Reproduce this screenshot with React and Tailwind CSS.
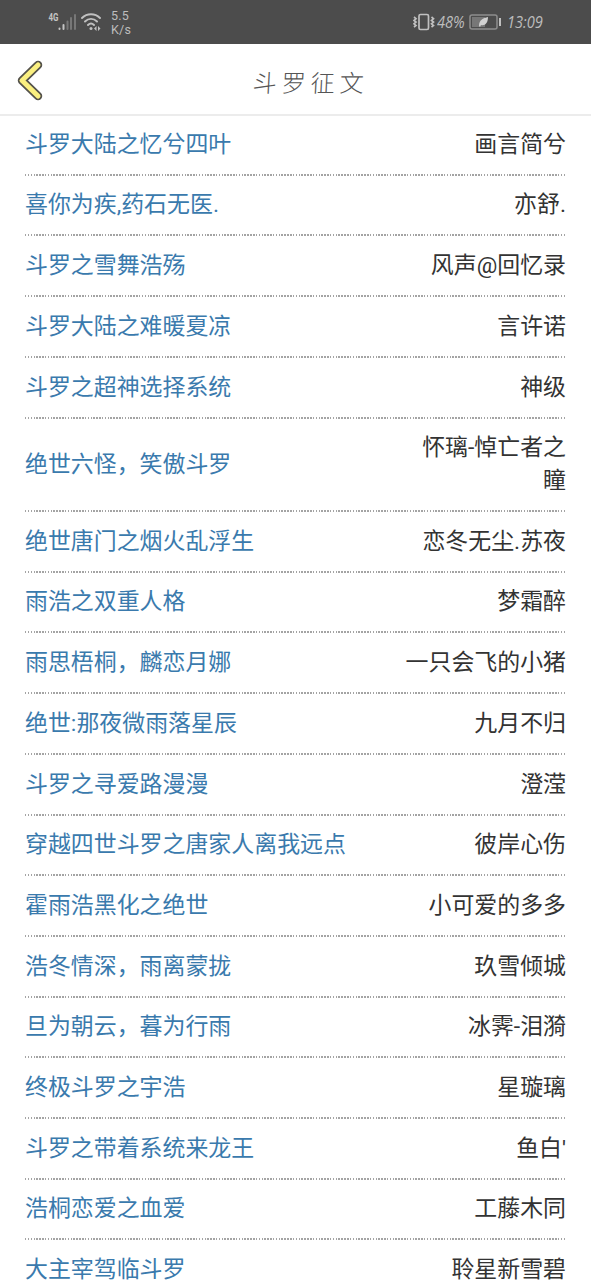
const entries = [
  { title: '斗罗大陆之忆兮四叶', author: '画言简兮' },
  { title: '喜你为疾,药石无医.', author: '亦舒.' },
  { title: '斗罗之雪舞浩殇', author: '风声@回忆录' },
  { title: '斗罗大陆之难暖夏凉', author: '言许诺' },
  { title: '斗罗之超神选择系统', author: '神级' },
  { title: '绝世六怪，笑傲斗罗', author: '怀璃-悼亡者之瞳' },
  { title: '绝世唐门之烟火乱浮生', author: '恋冬无尘.苏夜' },
  { title: '雨浩之双重人格', author: '梦霜醉' },
  { title: '雨思梧桐，麟恋月娜', author: '一只会飞的小猪' },
  { title: '绝世:那夜微雨落星辰', author: '九月不归' },
  { title: '斗罗之寻爱路漫漫', author: '澄滢' },
  { title: '穿越四世斗罗之唐家人离我远点', author: '彼岸心伤' },
  { title: '霍雨浩黑化之绝世', author: '小可爱的多多' },
  { title: '浩冬情深，雨离蒙拢', author: '玖雪倾城' },
  { title: '旦为朝云，暮为行雨', author: '冰霁-泪漪' },
  { title: '终极斗罗之宇浩', author: '星璇璃' },
  { title: '斗罗之带着系统来龙王', author: "鱼白'" },
  { title: '浩桐恋爱之血爱', author: '工藤木同' },
  { title: '大主宰驾临斗罗', author: '聆星新雪碧' },
];

const StatusBar = () => (
  <div className="flex h-11 shrink-0 items-center justify-between bg-[#4c4c4c] pl-12 pr-12 text-[#bdbdbd]">
    <div className="flex items-center">
      <svg width="30" height="22" viewBox="0 0 30 22">
        <text x="0.5" y="10" fontSize="10" fontWeight="700" textLength="10" lengthAdjust="spacingAndGlyphs" fill="#c4c4c4" className="font-['Roboto',sans-serif]">4G</text>
        <g strokeWidth="2" strokeLinecap="round">
          <path d="M11.5 17.5v.5M15.5 14v4" stroke="#c4c4c4" />
          <path d="M19.5 10.5v7.5M23 7v11M27 4v14" stroke="#777" />
        </g>
      </svg>
      <svg className="ml-[3px]" width="22" height="22" viewBox="0 0 22 22" fill="none" stroke="#c0c0c0" strokeWidth="1.9" strokeLinecap="round">
        <path d="M1 7C6 2 14 2 19 7M4 10.5c3.5-3.5 8.5-3.5 12 0M7 14c2-2 4-2 6 0" />
        <circle cx="10" cy="17.5" r="1.5" fill="#c0c0c0" stroke="none" />
        <path d="M15.5 15v5l-2.5-2.5zM17 15v5l2.5-2.5z" fill="#c0c0c0" stroke="none" />
      </svg>
      <div className="ml-2 pt-0.5 font-['Roboto',sans-serif] text-[12.5px] leading-[14.5px] tracking-[0.2px]">
        <div>5.5</div>
        <div>K/s</div>
      </div>
    </div>
    <div className="flex items-center font-['Open_Sans',sans-serif] italic">
      <svg width="24" height="20" viewBox="0 0 24 20" fill="none" stroke="#c0c0c0" strokeWidth="1.7">
        <rect x="6" y="2.5" width="9.5" height="15" rx="1.5" />
        <path d="M1 5l2 1.7-2 1.7 2 1.7-2 1.7 2 1.7-2 1.7M18.5 5l2 1.7-2 1.7 2 1.7-2 1.7 2 1.7-2 1.7" />
      </svg>
      <span className="w-8 origin-left scale-x-[0.86] whitespace-nowrap text-[17px]">48%</span>
      <svg width="33" height="16" viewBox="0 0 33 16">
        <rect x="1" y="1" width="27" height="14" rx="2" fill="none" stroke="#8d8d8d" strokeWidth="1.5" />
        <rect x="3" y="3" width="13" height="10" fill="#777" />
        <path d="M10 12c0-6 4-8 9-9 0 6-3 9-7 8l-1 2z" fill="#d0d0d0" />
        <path d="M31 4v8" stroke="#c0c0c0" strokeWidth="2" />
      </svg>
      <span className="ml-[5px] w-9 origin-left scale-x-[0.86] whitespace-nowrap text-[17px]">13:09</span>
    </div>
  </div>
);

const Header = () => (
  <div className="grid h-[72px] shrink-0 grid-cols-[60px_1fr_60px] items-center border-b-2 border-[#ececec]">
    <button className="pl-[17px] pt-[3px]" aria-label="返回">
      <svg width="27" height="42" viewBox="0 0 27 42" fill="none" strokeLinecap="round" strokeLinejoin="round">
        <path d="M21 5L5 20.5l16 15.5" stroke="#54524a" strokeWidth="8.5" />
        <path d="M21 5L5 20.5l16 15.5" stroke="#fbf080" strokeWidth="5" />
      </svg>
    </button>
    <h1 className="-skew-x-3 pl-[31px] pt-[9px] text-center text-[24px] font-light tracking-[5px] text-[#555]">斗罗征文</h1>
  </div>
);

const EntryRow = ({ title, author }) => (
  <li>
    <div className="flex items-center justify-between pt-[13.7px] pb-[12.22px] leading-[32.8px]">
      <a href="#" className="text-[#3a7aad]">{title}</a>
      <span className="max-w-[162px] text-right text-[#333]">{author}</span>
    </div>
    <div className="h-[2px] bg-[repeating-linear-gradient(90deg,#a4a4a4_0_1.5px,transparent_1.5px_2.85px)]" />
  </li>
);

const App = () => {
  return (
    <div className="flex h-[1280px] w-full flex-col overflow-hidden bg-white font-['Roboto','Noto_Sans_CJK_SC',sans-serif]">
      <StatusBar />
      <Header />
      <ul className="-mt-[1px] px-[25px] text-[22.93px]">
        {entries.map((entry) => (
          <EntryRow key={entry.title} {...entry} />
        ))}
      </ul>
    </div>
  );
};

export default App;
